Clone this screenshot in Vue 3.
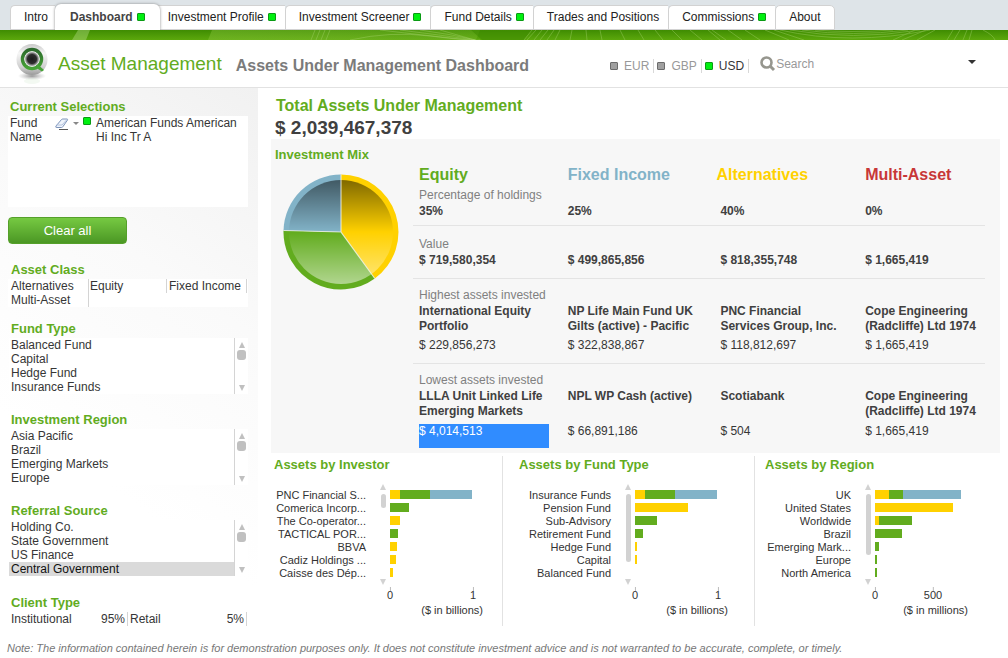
<script setup>
import { ref } from 'vue'

const tabs = [
  { label: 'Intro' },
  { label: 'Dashboard', dot: true, active: true },
  { label: 'Investment Profile', dot: true },
  { label: 'Investment Screener', dot: true },
  { label: 'Fund Details', dot: true },
  { label: 'Trades and Positions' },
  { label: 'Commissions', dot: true },
  { label: 'About' },
]

const currency = ref('USD')
const currencies = ['EUR', 'GBP', 'USD']

const lists = [
  { title: 'Fund Type', items: ['Balanced Fund', 'Capital', 'Hedge Fund', 'Insurance Funds'] },
  { title: 'Investment Region', items: ['Asia Pacific', 'Brazil', 'Emerging Markets', 'Europe'] },
  {
    title: 'Referral Source',
    items: ['Holding Co.', 'State Government', 'US Finance', 'Central Government'],
    selected: 'Central Government',
  },
]

const mixRows = [
  {
    label: 'Percentage of holdings',
    key: 'pct',
    cells: [{ strong: '35%' }, { strong: '25%' }, { strong: '40%' }, { strong: '0%' }],
  },
  {
    label: 'Value',
    key: 'val',
    cells: [
      { strong: '$ 719,580,354' },
      { strong: '$ 499,865,856' },
      { strong: '$ 818,355,748' },
      { strong: '$ 1,665,419' },
    ],
  },
  {
    label: 'Highest assets invested',
    key: 'high',
    cells: [
      { name: 'International Equity Portfolio', value: '$ 229,856,273' },
      { name: 'NP Life Main Fund UK Gilts (active) - Pacific', value: '$ 322,838,867' },
      { name: 'PNC Financial Services Group, Inc.', value: '$ 118,812,697' },
      { name: 'Cope Engineering (Radcliffe) Ltd 1974', value: '$ 1,665,419' },
    ],
  },
  {
    label: 'Lowest assets invested',
    key: 'low',
    cells: [
      { name: 'LLLA Unit Linked Life Emerging Markets', value: '$ 4,014,513', marked: true },
      { name: 'NPL WP Cash (active)', value: '$ 66,891,186' },
      { name: 'Scotiabank', value: '$ 504' },
      { name: 'Cope Engineering (Radcliffe) Ltd 1974', value: '$ 1,665,419' },
    ],
  },
]

// Each row: label, then [alternatives, equity, fixed income]
const charts = [
  {
    title: 'Assets by Investor',
    unit: '($ in billions)',
    max: 1.157,
    thumb: 14,
    ticks: [0, 1],
    rows: [
      ['PNC Financial S...', [0.12, 0.36, 0.51]],
      ['Comerica Incorp...', [0, 0.23, 0]],
      ['The Co-operator...', [0.12, 0, 0]],
      ['TACTICAL POR...', [0, 0.1, 0]],
      ['BBVA', [0.085, 0, 0]],
      ['Cadiz Holdings ...', [0.073, 0, 0]],
      ['Caisse des Dép...', [0.037, 0, 0]],
    ],
  },
  {
    title: 'Assets by Fund Type',
    unit: '($ in billions)',
    max: 1.157,
    thumb: 68,
    ticks: [0, 1],
    rows: [
      ['Insurance Funds', [0.12, 0.36, 0.51]],
      ['Pension Fund', [0.64, 0, 0]],
      ['Sub-Advisory', [0, 0.265, 0]],
      ['Retirement Fund', [0, 0.1, 0]],
      ['Hedge Fund', [0.025, 0, 0]],
      ['Capital', [0.025, 0, 0]],
      ['Balanced Fund', [0, 0, 0]],
    ],
  },
  {
    title: 'Assets by Region',
    unit: '($ in millions)',
    max: 828,
    thumb: 61,
    ticks: [0, 500],
    rows: [
      ['UK', [121, 121, 500]],
      ['United States', [673, 0, 0]],
      ['Worldwide', [35, 285, 0]],
      ['Brazil', [0, 233, 0]],
      ['Emerging Mark...', [0, 35, 0]],
      ['Europe', [0, 17, 0]],
      ['North America', [0, 17, 0]],
    ],
  },
]
const series = ['alt', 'equity', 'fixed']
const pct = (v, max) => `${(v / max) * 100}%`
</script>

<template>
  <div class="page">
    <nav class="tabs">
      <a v-for="t in tabs" :key="t.label" href="#" class="tab" :class="{ active: t.active }">
        {{ t.label }}<i v-if="t.dot" class="dot"></i>
      </a>
    </nav>
    <svg class="stripe" viewBox="0 0 1008 10" preserveAspectRatio="none" aria-hidden="true">
      <defs>
        <linearGradient id="sg" x1="0" y1="0" x2="0" y2="1">
          <stop offset="0" stop-color="#3f8c02" />
          <stop offset="1" stop-color="#5ca80c" />
        </linearGradient>
        <linearGradient id="sl" x1="0" y1="0" x2="1" y2="0">
          <stop offset="0" stop-color="#8cc63f" stop-opacity=".4" />
          <stop offset="1" stop-color="#8cc63f" stop-opacity=".25" />
        </linearGradient>
      </defs>
      <rect width="1008" height="10" fill="url(#sg)" />
      <path d="M212 0H480L476 10H208Z" fill="url(#sl)" />
      <path d="M78 0h12l-4 10H72Z" fill="#b7df8a" opacity=".4" />
      <path d="M471 0 482 10H524L532 0Z" fill="#3f8c02" opacity=".6" />
      <g fill="none" stroke="#b2db7c" stroke-width=".7" opacity=".5">
        <path d="M315 0l-4 10M320 0l-4 10M325 0l-4 10M330 0l-4 10M350 10q40-9 80-4t50 4M380 0q50 6 90 10M400 0q40 5 75 10M420 0q30 4 56 10M440 0l35 10" />
        <path d="M532 0l-8 10M536 0l-9 10M542 0l-8 10M548 0l-8 10M554 0l-7 10M560 0l-5 10M572 0l-2 10M586 0l1 10M600 0l2 10M620 0l5 10M638 0l6 10M655 0l8 10M672 0l10 10M690 0l12 10M708 0l12 10M712 0l14 10M728 0l14 10M745 0l15 10" />
        <path d="M780 0q70 16 150 0M790 0q62 11 130 0M802 0q50 7 106 0M815 0q35 3 78 0M765 0l24 10M774 0l30 10M915 0l-22 10M926 0l-24 10M935 0l-18 10M953 0l-6 10M960 0l-6 10M967 0l-4 10M972 0l-3 10M983 0q10 5 12 10" />
      </g>
    </svg>

    <header class="header">
      <svg class="logo" viewBox="0 0 34 42" aria-hidden="true">
        <defs>
          <linearGradient id="lg1" x1="0" y1="0" x2="0" y2="1">
            <stop offset="0" stop-color="#c8c8c8" />
            <stop offset=".3" stop-color="#f6f6f6" />
            <stop offset=".75" stop-color="#cfcfcf" />
            <stop offset="1" stop-color="#9a9a9a" />
          </linearGradient>
          <linearGradient id="lg2" x1="0" y1="0" x2="0" y2="1">
            <stop offset="0" stop-color="#2c6a2c" />
            <stop offset="1" stop-color="#46a336" />
          </linearGradient>
          <radialGradient id="lg3">
            <stop offset="0" stop-color="#666" stop-opacity=".7" />
            <stop offset="1" stop-color="#999" stop-opacity="0" />
          </radialGradient>
          <radialGradient id="lg4">
            <stop offset="0" stop-color="#1c1c1c" />
            <stop offset=".6" stop-color="#2c2c2c" />
            <stop offset=".85" stop-color="#9a9a9a" />
            <stop offset="1" stop-color="#f2f2f2" />
          </radialGradient>
        </defs>
        <ellipse cx="17" cy="33" rx="14" ry="4" fill="url(#lg3)" />
        <ellipse cx="17" cy="38" rx="8" ry="3" fill="#cfe6cb" opacity=".25" />
        <circle cx="17" cy="16.500" r="15.500" fill="url(#lg1)" />
        <circle cx="17" cy="16" r="9.500" fill="#f4f4f4" stroke="url(#lg2)" stroke-width="3.500" />
        <path d="M19 18 29 27 27 28.500 23 26Z" fill="#46a336" />
        <circle cx="17" cy="16" r="7.500" fill="url(#lg4)" />
      </svg>
      <span class="brand">Asset Management</span>
      <h1>Assets Under Management Dashboard</h1>
      <div class="tools">
        <div class="currencies">
          <button
            v-for="c in currencies"
            :key="c"
            type="button"
            class="currency"
            :class="{ on: currency === c }"
            @click="currency = c"
          >
            <i class="dot" :class="{ off: currency !== c }"></i>{{ c }}
          </button>
        </div>
        <label class="search">
          <svg viewBox="0 0 16 16" aria-hidden="true">
            <circle cx="6.500" cy="6.500" r="5" fill="none" stroke="#96968e" stroke-width="2.600" />
            <path d="M10 10l4 4" stroke="#96968e" stroke-width="3" />
          </svg>
          <input type="search" placeholder="Search" aria-label="Search" />
        </label>
        <button type="button" class="more" aria-label="More"><i></i></button>
      </div>
    </header>

    <div class="body">
      <aside class="side">
        <section class="current">
          <h2>Current Selections</h2>
          <div class="selection">
            <span class="field">Fund Name</span>
            <span class="ops">
              <svg viewBox="0 0 14 12" aria-hidden="true">
                <path d="M1 8 6.500 1.500Q7 1 8 1h4q1 0 .5 1L8 8.500Q7.500 9.500 6.500 9.500H2Q0 9.500 1 8Z" fill="#eef3fb" stroke="#7e95bb" />
                <path d="M1.500 7l5.500 0 5-5.500" fill="none" stroke="#b4c3dd" />
                <path d="M4 11.500h9" stroke="#555" />
              </svg>
              <i class="caret"></i>
              <i class="dot"></i>
            </span>
            <span class="chosen">American Funds American Hi Inc Tr A</span>
          </div>
          <button type="button" class="clear">Clear all</button>
        </section>

        <section class="group asset">
          <h2>Asset Class</h2>
          <div class="trio">
            <div class="cell">
              <button type="button">Alternatives</button>
              <button type="button">Multi-Asset</button>
            </div>
            <div class="cell"><button type="button" class="last">Equity</button></div>
            <div class="cell"><button type="button" class="last">Fixed Income</button></div>
          </div>
        </section>

        <section v-for="l in lists" :key="l.title" class="group">
          <h2>{{ l.title }}</h2>
          <div class="listbox">
            <ul>
              <li v-for="i in l.items" :key="i">
                <button type="button" :class="{ selected: i === l.selected }">{{ i }}</button>
              </li>
            </ul>
            <div class="scroll"><i class="up"></i><i class="thumb"></i><i class="down"></i></div>
          </div>
        </section>

        <section class="group client">
          <h2>Client Type</h2>
          <div class="duo">
            <button type="button"><span>Institutional</span><span>95%</span></button>
            <button type="button"><span>Retail</span><span>5%</span></button>
          </div>
        </section>
      </aside>

      <main class="main">
        <h2 class="total-title">Total Assets Under Management</h2>
        <p class="total">$ 2,039,467,378</p>

        <section class="mix">
          <div class="mix-chart">
            <h2>Investment Mix</h2>
            <svg viewBox="-58 -58 116 116" role="img" aria-label="Investment Mix">
              <defs>
                <linearGradient id="shade" x1="0" y1="-52" x2="0" y2="52" gradientUnits="userSpaceOnUse">
                  <stop offset="0" stop-color="#000" stop-opacity=".5" />
                  <stop offset=".5" stop-color="#000" stop-opacity="0" />
                  <stop offset=".5" stop-color="#fff" stop-opacity="0" />
                  <stop offset="1" stop-color="#fff" stop-opacity=".5" />
                </linearGradient>
              </defs>
              <path d="M0 0V-57.500A57.500 57.500 0 0 1 33.800 46.500Z" fill="#ffd100" />
              <path d="M0 0 33.800 46.500A57.500 57.500 0 0 1 -57.500 -1.500Z" fill="#62ac1e" />
              <path d="M0 0-57.500-1.500A57.500 57.500 0 0 1 0-57.500Z" fill="#82b3c8" />
              <circle r="52" fill="url(#shade)" />
              <path d="M0-57.500V0L33.800 46.500M0 0-57.500-1.500" fill="none" stroke="#f4f4e8" stroke-opacity=".75" stroke-width="1.200" />
            </svg>
          </div>
          <table>
            <thead>
              <tr>
                <th scope="col" class="c-equity">Equity</th>
                <th scope="col" class="c-fixed">Fixed Income</th>
                <th scope="col" class="c-alt">Alternatives</th>
                <th scope="col" class="c-multi">Multi-Asset</th>
              </tr>
            </thead>
            <tbody>
              <tr v-for="r in mixRows" :key="r.key" :class="r.key">
                <td v-for="(c, n) in r.cells" :key="n">
                  <div class="label">{{ n === 0 ? r.label : '' }}</div>
                  <div v-if="c.strong" class="strong">{{ c.strong }}</div>
                  <template v-else>
                    <div class="name">{{ c.name }}</div>
                    <div class="value" :class="{ marked: c.marked }">{{ c.value }}</div>
                  </template>
                </td>
              </tr>
            </tbody>
          </table>
        </section>

        <div class="charts">
          <section v-for="c in charts" :key="c.title" class="chart">
            <h2>{{ c.title }}</h2>
            <div class="plot">
              <div class="names">
                <div v-for="r in c.rows" :key="r[0]">{{ r[0] }}</div>
              </div>
              <div class="scroll wide">
                <i class="up"></i><i class="thumb" :style="{ height: c.thumb + 'px' }"></i><i class="down"></i>
              </div>
              <div class="area">
                <div v-for="r in c.rows" :key="r[0]" class="bar">
                  <i v-for="(v, n) in r[1]" :key="n" :class="series[n]" :style="{ width: pct(v, c.max) }"></i>
                </div>
                <div class="axis">
                  <span v-for="t in c.ticks" :key="t" :style="{ left: pct(t, c.max) }">{{ t }}</span>
                </div>
                <div class="unit">{{ c.unit }}</div>
              </div>
            </div>
          </section>
        </div>
      </main>
    </div>

    <footer>
      Note: The information contained herein is for demonstration purposes only. It does not constitute investment
      advice and is not warranted to be accurate, complete, or timely.
    </footer>
  </div>
</template>

<style>
body {
  background: #fff;
}
</style>

<style scoped>
.page {
  font: 12px/14px 'Liberation Sans', Arial, sans-serif;
  color: #363636;
}
h1,
h2,
p,
ul {
  margin: 0;
  padding: 0;
}
ul {
  list-style: none;
}
button,
input {
  font: inherit;
  color: inherit;
  border: 0;
  padding: 0;
  margin: 0;
  background: none;
}
i {
  display: block;
}
h2 {
  font-size: 13px;
  line-height: 20px;
  color: #62ac1e;
}
.dot {
  flex: none;
  box-sizing: border-box;
  width: 8px;
  height: 8px;
  border: 1px solid #0a9a14;
  border-radius: 1px;
  background: #00f010;
}
.dot.off {
  border-color: #6c6c6c;
  background: #a0a0a0;
}

.tabs {
  display: flex;
  align-items: flex-end;
  height: 30px;
  padding-left: 10px;
  background: #dee4e8;
}
.tab {
  display: flex;
  align-items: center;
  gap: 4px;
  box-sizing: border-box;
  height: 25px;
  padding: 0 9px 2px 13px;
  border: 1px solid #d2d2d2;
  border-right: 0;
  border-radius: 5px 0 0 0;
  background: #fff;
  color: #222;
  text-decoration: none;
  white-space: nowrap;
}
.tab:first-child {
  padding-right: 7px;
}
.tab:last-child {
  padding-right: 13px;
  border-right: 1px solid #d2d2d2;
  border-radius: 5px 5px 0 0;
}
.tab.active {
  z-index: 1;
  height: 26px;
  margin-right: -6px;
  padding: 0 15px;
  border: 0;
  border-radius: 6px 6px 0 0;
  box-shadow: 0 0 3px #888;
  clip-path: inset(-4px -4px 0 -4px);
  font-weight: bold;
  color: #444;
}
.stripe {
  display: block;
  width: 100%;
  height: 10px;
}

.header {
  display: flex;
  align-items: center;
  box-sizing: border-box;
  height: 48px;
  padding: 0 32px 0 15px;
  border-bottom: 1px solid #e2e2e2;
}
.logo {
  width: 34px;
  height: 42px;
}
.brand {
  margin-left: 9px;
  font-size: 19px;
  line-height: 24px;
  color: #62ac1e;
}
h1 {
  margin: 4px 0 0 14px;
  font-size: 16px;
  line-height: 20px;
  color: #7b7b7b;
  white-space: nowrap;
}
.tools {
  flex: 1;
  display: flex;
  align-items: center;
  margin-left: 81px;
}
.currencies {
  display: flex;
  margin-top: 4px;
}
.currency {
  display: flex;
  align-items: center;
  gap: 6px;
  padding-right: 4px;
  margin-right: 3px;
  border-right: 1px solid #d8d8d8;
  color: #999;
}
.currency.on {
  color: #363636;
}
.search {
  display: flex;
  align-items: center;
  margin-left: 8px;
}
.search svg {
  width: 16px;
  height: 16px;
}
.search input {
  width: 150px;
  outline: 0;
}
.search input::placeholder {
  color: #999;
  opacity: 1;
}
.more {
  margin-left: auto;
  padding: 0 0 4px;
}
.more i {
  border: 4px solid transparent;
  border-top-color: #333;
  border-bottom: 0;
}

.body {
  display: flex;
}
.side {
  flex: none;
  box-sizing: border-box;
  width: 258px;
  padding: 8px 10px 0 8px;
  background: linear-gradient(215deg, #f1f1f1, #fafafa 35%, #fff 70%);
}
.side h2 {
  padding: 2px 0 0 3px;
  line-height: 18px;
}
.side .current h2 {
  padding-left: 2px;
}
.selection {
  display: grid;
  grid-template-columns: 45px 41px 1fr;
  min-height: 91px;
  padding-left: 2px;
  background: #fff;
}
.ops {
  display: flex;
  gap: 4px;
  padding-top: 1px;
}
.ops svg {
  width: 14px;
  height: 12px;
  margin-top: 1px;
}
.ops .caret {
  margin-top: 5px;
  border: 3px solid transparent;
  border-top-color: #888;
  border-bottom: 0;
}
.clear {
  width: 119px;
  height: 27px;
  margin: 10px 0 15px;
  border: 1px solid #55a02a;
  border-radius: 4px;
  background: linear-gradient(#76c942, #4b9724);
  color: #fff;
  font-size: 13px;
  display: block;
}
.group {
  margin-bottom: 15px;
}
.group.asset {
  margin-bottom: 11px;
}
.group.client {
  margin: 16px 0 0;
}
.group button {
  display: block;
  width: 100%;
  height: 14px;
  text-align: left;
  white-space: nowrap;
}
.trio {
  display: grid;
  grid-template-columns: 81px 78px 80px;
  background: #fff;
}
.trio .cell:first-child {
  padding-left: 3px;
  border-right: 1px solid #d4d4d4;
}
.trio .last {
  padding-left: 1px;
  border-right: 1px solid #d4d4d4;
}
.trio .cell:last-child .last {
  padding-left: 2px;
}
.listbox {
  display: flex;
  margin-left: 1px;
  background: #fff;
}
.listbox ul {
  flex: 1;
  border-right: 1px solid #d4d4d4;
}
.listbox button {
  padding-left: 2px;
}
.listbox .selected {
  background: #dadada;
  color: #111;
}
.scroll {
  display: flex;
  flex-direction: column;
  align-items: center;
  width: 13px;
  padding: 4px 0 3px;
}
.scroll .up,
.scroll .down {
  border: 3px solid transparent;
}
.scroll .up {
  border-top: 0;
  border-bottom: 6px solid #c0c0c0;
}
.scroll .down {
  margin-top: auto;
  border-bottom: 0;
  border-top: 6px solid #c0c0c0;
}
.scroll .thumb {
  width: 9px;
  height: 10px;
  margin-top: 2px;
  border-radius: 3px;
  background: #c0c0c0;
}
.duo {
  display: grid;
  grid-template-columns: 120px 119px;
}
.duo button {
  display: flex;
  justify-content: space-between;
  padding: 0 2px 0 3px;
  border-right: 1px solid #d4d4d4;
}
.duo button + button {
  padding-left: 2px;
}

.main {
  flex: 1;
  min-width: 0;
  padding: 8px 8px 0 13px;
}
.total-title {
  padding-left: 5px;
  font-size: 16px;
  line-height: 20px;
}
.total {
  padding-left: 4px;
  font-size: 19px;
  line-height: 23px;
  font-weight: bold;
  color: #404040;
}
.mix {
  display: flex;
  align-items: flex-start;
  padding: 6px 15px 5px 4px;
  background: #f7f7f7;
}
.mix-chart {
  flex: none;
  width: 138px;
}
.mix-chart svg {
  display: block;
  width: 116px;
  height: 116px;
  margin: 9px 0 0 8px;
}
table {
  width: 100%;
  margin-top: 18px;
  border-collapse: collapse;
  table-layout: fixed;
}
th {
  box-sizing: border-box;
  width: 26%;
  height: 24px;
  padding: 0 0 0 6px;
  font-size: 16px;
  line-height: 24px;
  text-align: left;
}
.c-equity {
  color: #62ac1e;
}
.c-fixed {
  color: #82b3c8;
}
.c-alt {
  color: #ffd100;
}
.c-multi {
  width: 22%;
  color: #c83737;
}
td {
  padding: 0 0 0 6px;
  vertical-align: top;
}
td:nth-child(3) {
  padding-left: 10px;
}
tr + tr td {
  border-top: 1px solid #e4e4e4;
}
.label {
  height: 16px;
  line-height: 16px;
  color: #808080;
  white-space: nowrap;
}
.strong,
.name {
  font-weight: bold;
  color: #404040;
}
.strong {
  line-height: 16px;
}
.pct td {
  height: 38px;
}
.val td {
  height: 42px;
  padding-top: 10px;
}
.high td,
.low td {
  padding-top: 8px;
}
.high td {
  height: 76px;
}
.name {
  width: 130px;
  min-height: 30px;
  margin-top: 1px;
  line-height: 15px;
}
.value {
  margin-top: 5px;
}
.high .value {
  margin-top: 4px;
}
.value.marked {
  width: 130px;
  height: 24px;
  background: #308cff;
  color: #fff;
}

.charts {
  display: grid;
  grid-template-columns: 232fr 252fr 245fr;
  padding-top: 3px;
}
.chart {
  height: 170px;
  padding-left: 16px;
  border-right: 1px solid #e2e2e2;
}
.chart:first-child {
  padding-left: 3px;
}
.chart:last-child {
  padding-left: 10px;
  border: 0;
}
.chart h2 {
  line-height: 18px;
}
.plot {
  display: flex;
  margin-top: 10px;
  font-size: 11px;
  line-height: 13px;
  color: #333;
}
.names {
  width: 92px;
  padding-top: 5px;
  text-align: right;
  white-space: nowrap;
}
.chart:last-child .names {
  width: 86px;
}
.scroll.wide {
  width: 8px;
  height: 101px;
  box-sizing: border-box;
  margin: 0 3px 0 13px;
  padding: 0;
}
.wide .thumb {
  flex: none;
  width: 5px;
  margin-top: 4px;
  background: #d2d2d2;
}
.wide .up {
  border-bottom-color: #d2d2d2;
}
.wide .down {
  border-top-color: #d2d2d2;
}
.area {
  width: 96px;
  padding-top: 6px;
}
.bar {
  display: flex;
  height: 9px;
  margin-bottom: 4px;
}
.alt {
  background: #ffd100;
}
.equity {
  background: #62ac1e;
}
.fixed {
  background: #82b3c8;
}
.axis {
  position: relative;
  height: 17px;
  margin-top: 10px;
}
.axis span {
  position: absolute;
  top: 0;
  padding-top: 2px;
  transform: translateX(-50%);
  background: linear-gradient(#bbb, #bbb) 50% 0 / 1px 4px no-repeat;
}
.unit {
  padding-right: 3px;
  text-align: right;
}
footer {
  padding: 7px 7px 3px;
  margin-top: 8px;
  font-size: 11px;
  line-height: 14px;
  font-style: italic;
  color: #777;
}
</style>
